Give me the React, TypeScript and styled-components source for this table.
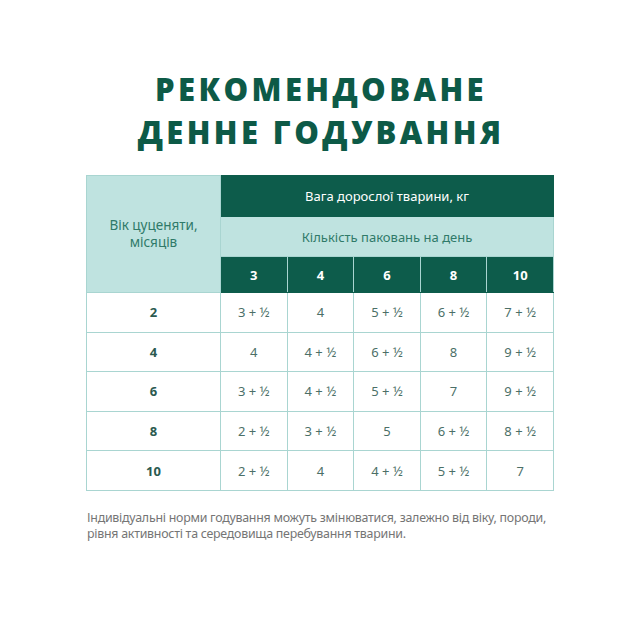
import React from 'react';
import styled, { createGlobalStyle } from 'styled-components';

const GlobalStyle = createGlobalStyle`
	html, body {
		margin: 0;
		padding: 0;
		background: #ffffff;
	}
	body {
		font-family: 'Noto Sans', 'Open Sans', sans-serif;
	}
`;

const PageStyleC = styled.div`
	width: 640px;
	height: 630px;
	display: flex;
	flex-direction: column;
	align-items: center;
	padding-top: 68px;
	box-sizing: border-box;
`;

const TitleStyleC = styled.h1`
	margin: 0;
	font-family: 'Open Sans', sans-serif;
	font-weight: 800;
	font-size: 31px;
	line-height: 43px;
	letter-spacing: 3.4px;
	color: #0d5a47;
	text-align: center;
	padding-left: 2px;
`;

const TableStyleC = styled.table`
	margin-top: 21px;
	width: 467px;
	border-collapse: collapse;
	table-layout: fixed;
	border: 1.5px solid #a9d5d1;
`;

const ColStyleC = styled.col<{ $w: number }>`
	width: ${(p) => p.$w}px;
`;

type Variant = 'dark' | 'light' | 'label' | 'value';

const CellStyleC = styled.td<{ $variant: Variant; $h?: number }>`
	padding: 0;
	text-align: center;
	vertical-align: middle;
	height: ${(p) => p.$h ?? 38.6}px;
	border: 1.5px solid #a9d5d1;
	font-size: 13px;
	font-weight: ${(p) => (p.$variant === 'value' || p.$variant === 'light' ? 400 : 700)};
	background: ${(p) =>
		p.$variant === 'dark' ? '#0d5c4b' : p.$variant === 'light' ? '#bfe3e0' : '#ffffff'};
	color: ${(p) =>
		p.$variant === 'dark'
			? '#ffffff'
			: p.$variant === 'light'
			? '#2f7a69'
			: p.$variant === 'label'
			? '#2b5a50'
			: '#4b6f67'};
	border-color: ${(p) => (p.$variant === 'dark' ? '#0d5c4b' : '#a9d5d1')};
`;

const WeightTitleCellStyleC = styled(CellStyleC)`
	font-weight: 400;
`;

const HeadNumCellStyleC = styled(CellStyleC)`
	border-left-color: #a9d5d1;
	border-right-color: #a9d5d1;
	border-bottom-color: #0d5c4b;
`;

const CornerCellStyleC = styled.th`
	background: #bfe3e0;
	color: #2f7a69;
	font-size: 13.5px;
	font-weight: 400;
	line-height: 17px;
	border: 1.5px solid #a9d5d1;
	padding: 0 4px;
`;

const NoteStyleC = styled.p`
	margin: 19px 0 0;
	width: 470px;
	font-size: 12.4px;
	line-height: 16px;
	color: #757575;
	letter-spacing: -0.25px;
	padding-left: 4px;
`;

const weights = ['3', '4', '6', '8', '10'];

const rows: { age: string; values: string[] }[] = [
	{ age: '2', values: ['3 + ½', '4', '5 + ½', '6 + ½', '7 + ½'] },
	{ age: '4', values: ['4', '4 + ½', '6 + ½', '8', '9 + ½'] },
	{ age: '6', values: ['3 + ½', '4 + ½', '5 + ½', '7', '9 + ½'] },
	{ age: '8', values: ['2 + ½', '3 + ½', '5', '6 + ½', '8 + ½'] },
	{ age: '10', values: ['2 + ½', '4', '4 + ½', '5 + ½', '7'] },
];

function App() {
	return (
		<>
			<GlobalStyle />
			<PageStyleC>
				<TitleStyleC>
					РЕКОМЕНДОВАНЕ
					<br />
					ДЕННЕ ГОДУВАННЯ
				</TitleStyleC>
				<TableStyleC>
					<colgroup>
						<ColStyleC $w={134} />
						{weights.map((w) => (
							<ColStyleC key={w} $w={66.6} />
						))}
					</colgroup>
					<thead>
						<tr>
							<CornerCellStyleC rowSpan={3}>
								Вік цуценяти,
								<br />
								місяців
							</CornerCellStyleC>
							<WeightTitleCellStyleC as="th" colSpan={5} $variant="dark" $h={40}>
								Вага дорослої тварини, кг
							</WeightTitleCellStyleC>
						</tr>
						<tr>
							<CellStyleC as="th" colSpan={5} $variant="light" $h={39}>
								Кількість паковань на день
							</CellStyleC>
						</tr>
						<tr>
							{weights.map((w) => (
								<HeadNumCellStyleC as="th" key={w} $variant="dark" $h={35}>
									{w}
								</HeadNumCellStyleC>
							))}
						</tr>
					</thead>
					<tbody>
						{rows.map((r) => (
							<tr key={r.age}>
								<CellStyleC $variant="label">{r.age}</CellStyleC>
								{r.values.map((v, i) => (
									<CellStyleC key={i} $variant="value">
										{v}
									</CellStyleC>
								))}
							</tr>
						))}
					</tbody>
				</TableStyleC>
				<NoteStyleC>
					Індивідуальні норми годування можуть змінюватися, залежно від віку, породи,
					рівня активності та середовища перебування тварини.
				</NoteStyleC>
			</PageStyleC>
		</>
	);
}

export default App;
